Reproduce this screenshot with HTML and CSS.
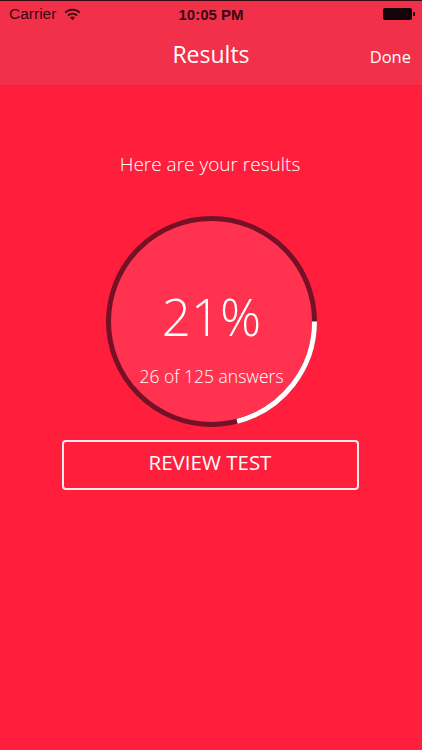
FILE: index.html
```html
<!DOCTYPE html>
<html>
  <head>
    <meta charset="utf-8" />
    <meta name="viewport" content="width=device-width, initial-scale=1" />
    <title>Results</title>
    <link rel="stylesheet" href="styles.css">
  </head>
  <body>
    <header class="top">
      <div class="status">
        <div class="status-left">
          <span>Carrier</span>
          <svg class="wifi" width="17" height="13" viewBox="0 0 16 12">
            <path d="M0.6 3.6a10.6 10.6 0 0 1 14.8 0l-1.2 1.3a8.8 8.8 0 0 0-12.4 0z" />
            <path d="M3.2 6.3a6.9 6.9 0 0 1 9.6 0l-1.2 1.3a5.1 5.1 0 0 0-7.2 0z" />
            <path d="M5.7 8.9a3.3 3.3 0 0 1 4.6 0L8 11.4z" />
          </svg>
        </div>
        <span class="clock">10:05 PM</span>
        <div class="battery"><i></i></div>
      </div>
      <nav class="nav">
        <h1>Results</h1>
        <a class="done">Done</a>
      </nav>
    </header>
    <main>
      <p class="lead">Here are your results</p>
      <div class="dial">
        <svg width="211" height="211" viewBox="0 0 211 211">
          <circle cx="105.5" cy="105.5" r="103" fill="#ff334f" stroke="#741126" stroke-width="5" />
          <path d="M208.5 105.5A103 103 0 0 1 131.1 205.3" fill="none" stroke="#fff" stroke-width="5" />
        </svg>
        <div class="score">
          <div class="percent">21%</div>
          <div class="count">26 of 125 answers</div>
        </div>
      </div>
      <a class="review">REVIEW TEST</a>
    </main>
  </body>
</html>
```

FILE: styles.css
```css
html, body {
  height: 100%;
}
body {
  margin: 0;
  width: 422px;
  height: 750px;
  overflow: hidden;
  background-color: #ff1f3d;
  color: #fff;
  font-family: "Open Sans", sans-serif;
  font-weight: 300;
}
.top {
  height: 84px;
  background-color: #f2304a;
  border-top: 1px solid #3a0a10;
  border-bottom: 1px solid #e02a42;
}
.status {
  height: 26px;
  padding: 0 9px;
  display: grid;
  grid-template-columns: 1fr auto 1fr;
  align-items: center;
  color: #3a0810;
  font-family: "Liberation Sans", sans-serif;
  font-weight: 400;
  font-size: 15.5px;
}
.status-left {
  display: flex;
  align-items: center;
  gap: 8px;
}
.wifi {
  fill: #3a0810;
}
.clock {
  font-weight: 700;
  font-size: 15px;
  color: #3a0810;
}
.battery {
  justify-self: end;
  width: 29px;
  height: 12px;
  margin-right: 1px;
  background-color: #14040a;
  border-radius: 2px;
  position: relative;
}
.battery i {
  position: absolute;
  right: -3px;
  top: 4px;
  width: 2px;
  height: 4px;
  background-color: #14040a;
}
.nav {
  height: 54px;
  display: grid;
  grid-template-columns: 1fr auto 1fr;
  align-items: center;
  padding: 0 11px;
}
.nav h1 {
  grid-column: 2;
  margin: 0;
  font-size: 23px;
  font-weight: 400;
}
.done {
  justify-self: end;
  font-size: 16.5px;
  font-weight: 400;
  padding-top: 5px;
}
main {
  display: flex;
  flex-direction: column;
  align-items: center;
}
.lead {
  margin: 65px 2px 0 0;
  font-size: 19px;
  line-height: 26px;
}
.dial {
  display: grid;
  margin-top: 39px;
  margin-left: 1px;
  width: 211px;
  height: 211px;
}
.dial svg, .score {
  grid-area: 1 / 1;
}
.score {
  display: flex;
  flex-direction: column;
  align-items: center;
}
.percent {
  margin-top: 64px;
  font-size: 51px;
  line-height: 72px;
}
.count {
  margin-top: 12px;
  font-size: 17.5px;
  line-height: 24px;
}
.review {
  display: block;
  box-sizing: border-box;
  width: 297px;
  height: 50px;
  margin-top: 13px;
  margin-right: 2px;
  border: 2px solid rgba(255, 255, 255, 0.9);
  border-radius: 4px;
  text-align: center;
  font-size: 20.5px;
  font-weight: 400;
  line-height: 41px;
}
```
